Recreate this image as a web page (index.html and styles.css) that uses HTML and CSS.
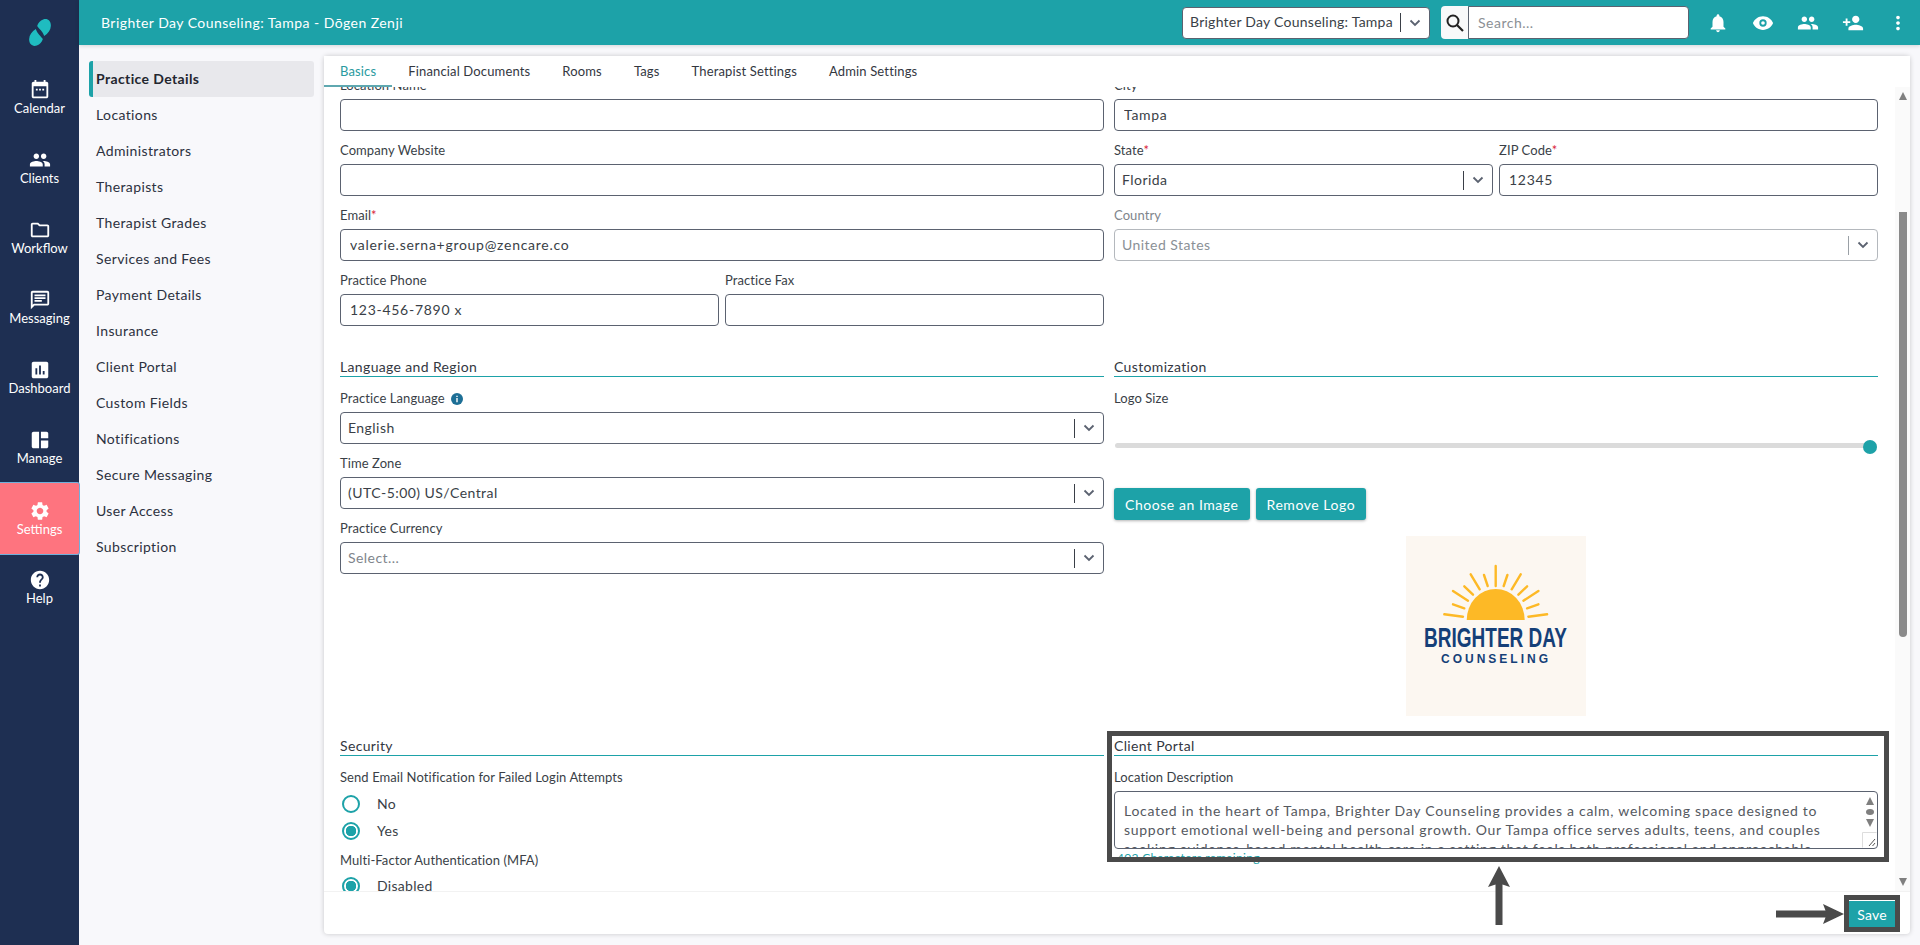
FILE: index.html
```html
<!DOCTYPE html>
<html lang="en">
<head>
    <meta charset="UTF-8">
    <meta name="viewport" content="width=device-width, initial-scale=1.0">
    <title>Practice Details</title>
    <link rel="stylesheet" href="styles.css">
</head>
<body>
    <nav class="rail">
        <div class="rail-logo">
            <svg width="22" height="27" viewBox="0 0 21.700 27"><path fill="#1fbcc0" d="M14 .5C18.500-1 22 2 21.700 7 21.500 11 19 14.500 15 17 13.500 12 10 10 8 7 9 4 11 1.500 14 .5z"/><path fill="#1fbcc0" d="M7.700 26.500C3.200 28-.3 25 0 20 .2 16 2.700 12.500 6.700 10 8.200 15 11.700 17 13.700 20 12.700 23 10.700 25.500 7.700 26.500z"/></svg>
        </div>
        <a class="rail-item"><svg class="icon" viewBox="0 0 24 24"><path fill-rule="evenodd" d="M19 3h-1V1h-2v2H8V1H6v2H5c-1.110 0-2 .9-2 2v14c0 1.100.89 2 2 2h14c1.100 0 2-.9 2-2V5c0-1.100-.9-2-2-2zm0 16H5V8h14v11z"/><path d="M7.500 10.500h2v2h-2zM11 10.500h2v2h-2zM14.500 10.500h2v2h-2z"/></svg><span>Calendar</span></a>
        <a class="rail-item"><svg class="icon" viewBox="0 0 24 24"><path d="M16 11c1.660 0 2.990-1.340 2.990-3S17.660 5 16 5c-1.660 0-3 1.340-3 3s1.340 3 3 3zm-8 0c1.660 0 2.990-1.340 2.990-3S9.660 5 8 5C6.340 5 5 6.340 5 8s1.340 3 3 3zm0 2c-2.330 0-7 1.170-7 3.500V19h14v-2.500c0-2.330-4.670-3.500-7-3.500zm8 0c-.29 0-.62.02-.97.05 1.160.84 1.970 1.970 1.970 3.450V19h6v-2.500c0-2.330-4.670-3.500-7-3.500z"/></svg><span>Clients</span></a>
        <a class="rail-item"><svg class="icon" viewBox="0 0 24 24"><path d="M9.170 6l2 2H20v10H4V6h5.170M10 4H4c-1.100 0-1.990.9-1.990 2L2 18c0 1.100.9 2 2 2h16c1.100 0 2-.9 2-2V8c0-1.100-.9-2-2-2h-8l-2-2z"/></svg><span>Workflow</span></a>
        <a class="rail-item"><svg class="icon" viewBox="0 0 24 24"><path d="M20 2H4c-1.100 0-2 .9-2 2v18l4-4h14c1.100 0 2-.9 2-2V4c0-1.100-.9-2-2-2zm0 14H5.200L4 17.200V4h16v12zM6 12h8v2H6zm0-3h12v2H6zm0-3h12v2H6z"/></svg><span>Messaging</span></a>
        <a class="rail-item"><svg class="icon" viewBox="0 0 24 24"><path d="M19 3H5c-1.100 0-2 .9-2 2v14c0 1.100.9 2 2 2h14c1.100 0 2-.9 2-2V5c0-1.100-.9-2-2-2zM9 17H7v-7h2v7zm4 0h-2V7h2v10zm4 0h-2v-4h2v4z"/></svg><span>Dashboard</span></a>
        <a class="rail-item"><svg class="icon" viewBox="0 0 24 24"><path d="M5 3h6v18H5c-1.100 0-2-.9-2-2V5c0-1.100.9-2 2-2zM13 3h6c1.100 0 2 .9 2 2v5h-8zM13 12.500h8V19c0 1.100-.9 2-2 2h-6z"/></svg><span>Manage</span></a>
        <a class="rail-item active"><svg class="icon" viewBox="0 0 24 24"><path d="M19.140 12.940c.04-.3.06-.61.06-.94 0-.32-.02-.64-.07-.94l2.030-1.580c.18-.14.23-.41.12-.61l-1.920-3.320c-.12-.22-.37-.29-.59-.22l-2.390.96c-.5-.38-1.030-.7-1.620-.94l-.36-2.540c-.04-.24-.24-.41-.48-.41h-3.840c-.24 0-.43.17-.47.41l-.36 2.540c-.59.24-1.130.57-1.620.94l-2.390-.96c-.22-.08-.47 0-.59.22L2.740 8.870c-.12.21-.08.47.12.61l2.030 1.580c-.05.3-.09.63-.09.94s.02.64.07.94l-2.030 1.580c-.18.14-.23.41-.12.61l1.920 3.320c.12.22.37.29.59.22l2.390-.96c.5.38 1.030.7 1.620.94l.36 2.540c.05.24.24.41.48.41h3.840c.24 0 .44-.17.47-.41l.36-2.540c.59-.24 1.130-.56 1.620-.94l2.390.96c.22.08.47 0 .59-.22l1.920-3.320c.12-.22.07-.47-.12-.61l-2.010-1.580zM12 15.600c-1.980 0-3.600-1.620-3.600-3.600s1.620-3.600 3.600-3.600 3.600 1.620 3.600 3.600-1.620 3.600-3.600 3.600z"/></svg><span>Settings</span></a>
        <a class="rail-item"><svg class="icon" viewBox="0 0 24 24"><path d="M12 2C6.480 2 2 6.480 2 12s4.480 10 10 10 10-4.480 10-10S17.520 2 12 2zm1 17h-2v-2h2v2zm2.070-7.750l-.9.920C13.450 12.900 13 13.500 13 15h-2v-.5c0-1.100.45-2.100 1.170-2.830l1.240-1.260c.37-.36.59-.86.59-1.410 0-1.100-.9-2-2-2s-2 .9-2 2H8c0-2.210 1.790-4 4-4s4 1.790 4 4c0 .88-.36 1.680-.93 2.250z"/></svg><span>Help</span></a>
    </nav>

    <div class="main">
        <header class="topbar">
            <div class="topbar-title">Brighter Day Counseling: Tampa - Dōgen Zenji</div>
            <div class="select topbar-select"><span class="select-value">Brighter Day Counseling: Tampa</span><span class="select-sep"></span><svg class="chevron" viewBox="0 0 12 8"><path d="M1.500 1.500 6 6l4.500-4.500"/></svg></div>
            <button class="search-btn"><svg width="20" height="20" viewBox="0 0 20 20"><circle cx="8" cy="8" r="5.500" fill="none" stroke="#222" stroke-width="2"/><path d="m12 12 6 6" stroke="#222" stroke-width="2.200"/></svg></button>
            <input class="search-input" placeholder="Search...">
            <div class="topbar-icons">
                <svg class="icon" viewBox="0 0 24 24"><path d="M12 22c1.100 0 2-.9 2-2h-4c0 1.100.89 2 2 2zm6-6v-5c0-3.070-1.640-5.640-4.500-6.320V4c0-.83-.67-1.500-1.500-1.500s-1.500.67-1.500 1.500v.68C7.630 5.360 6 7.920 6 11v5l-2 2v1h16v-1l-2-2z"/></svg>
                <svg class="icon" viewBox="0 0 24 24"><path fill-rule="evenodd" d="M12 4.500C7 4.500 2.730 7.610 1 12c1.730 4.390 6 7.500 11 7.500s9.270-3.110 11-7.500c-1.730-4.390-6-7.500-11-7.500zM12 8a4 4 0 1 1 0 8 4 4 0 0 1 0-8zM12 10a2 2 0 1 0 0 4 2 2 0 0 0 0-4z"/></svg>
                <svg class="icon" viewBox="0 0 24 24"><path d="M16 11c1.660 0 2.990-1.340 2.990-3S17.660 5 16 5c-1.660 0-3 1.340-3 3s1.340 3 3 3zm-8 0c1.660 0 2.990-1.340 2.990-3S9.660 5 8 5C6.340 5 5 6.340 5 8s1.340 3 3 3zm0 2c-2.330 0-7 1.170-7 3.500V19h14v-2.500c0-2.330-4.670-3.500-7-3.500zm8 0c-.29 0-.62.02-.97.05 1.160.84 1.970 1.970 1.970 3.450V19h6v-2.500c0-2.330-4.670-3.500-7-3.500z"/></svg>
                <svg class="icon" viewBox="0 0 24 24"><path d="M15 12c2.210 0 4-1.790 4-4s-1.790-4-4-4-4 1.790-4 4 1.790 4 4 4zm-9-2V7H4v3H1v2h3v3h2v-3h3v-2H6zm9 4c-2.670 0-8 1.340-8 4v2h16v-2c0-2.660-5.330-4-8-4z"/></svg>
                <svg class="icon" viewBox="0 0 24 24"><path d="M12 8c1.100 0 2-.9 2-2s-.9-2-2-2-2 .9-2 2 .9 2 2 2zm0 2c-1.100 0-2 .9-2 2s.9 2 2 2 2-.9 2-2-.9-2-2-2zm0 6c-1.100 0-2 .9-2 2s.9 2 2 2 2-.9 2-2-.9-2-2-2z"/></svg>
            </div>
        </header>

        <div class="below">
            <ul class="subnav">
                <li class="active">Practice Details</li>
                <li>Locations</li>
                <li>Administrators</li>
                <li>Therapists</li>
                <li>Therapist Grades</li>
                <li>Services and Fees</li>
                <li>Payment Details</li>
                <li>Insurance</li>
                <li>Client Portal</li>
                <li>Custom Fields</li>
                <li>Notifications</li>
                <li>Secure Messaging</li>
                <li>User Access</li>
                <li>Subscription</li>
            </ul>

            <section class="card">
                <div class="tabs">
                    <a class="tab active">Basics</a>
                    <a class="tab">Financial Documents</a>
                    <a class="tab">Rooms</a>
                    <a class="tab">Tags</a>
                    <a class="tab">Therapist Settings</a>
                    <a class="tab">Admin Settings</a>
                </div>

                <div class="pane">
                    <div class="form">
                        <div class="form-grid">
                            <div class="block basics">
                                <div class="field"><label>Location Name</label><input class="input"></div>
                                <div class="field"><label>Company Website</label><input class="input"></div>
                                <div class="field"><label>Email<em>*</em></label><input class="input" value="valerie.serna+group@zencare.co"></div>
                                <div class="split">
                                    <div class="field"><label>Practice Phone</label><input class="input" value="123-456-7890 x"></div>
                                    <div class="field"><label>Practice Fax</label><input class="input"></div>
                                </div>
                            </div>
                            <div class="block">
                                <div class="field"><label>City</label><input class="input" value="Tampa"></div>
                                <div class="split">
                                    <div class="field"><label>State<em>*</em></label><div class="select"><span class="select-value">Florida</span><span class="select-sep"></span><svg class="chevron" viewBox="0 0 12 8"><path d="M1.500 1.500 6 6l4.500-4.500"/></svg></div></div>
                                    <div class="field"><label>ZIP Code<em>*</em></label><input class="input" value="12345"></div>
                                </div>
                                <div class="field disabled"><label>Country</label><div class="select"><span class="select-value">United States</span><span class="select-sep"></span><svg class="chevron" viewBox="0 0 12 8"><path d="M1.500 1.500 6 6l4.500-4.500"/></svg></div></div>
                            </div>

                            <div class="block">
                                <h3 class="section-title">Language and Region</h3>
                                <div class="field"><label>Practice Language <svg class="info" viewBox="0 0 12 12"><circle cx="6" cy="6" r="6" fill="#1d6f96"/><path d="M5.300 5h1.400v4.200H5.300zM5.300 2.700h1.400V4H5.300z" fill="#fff"/></svg></label><div class="select"><span class="select-value">English</span><span class="select-sep"></span><svg class="chevron" viewBox="0 0 12 8"><path d="M1.500 1.500 6 6l4.500-4.500"/></svg></div></div>
                                <div class="field"><label>Time Zone</label><div class="select"><span class="select-value">(UTC-5:00) US/Central</span><span class="select-sep"></span><svg class="chevron" viewBox="0 0 12 8"><path d="M1.500 1.500 6 6l4.500-4.500"/></svg></div></div>
                                <div class="field"><label>Practice Currency</label><div class="select"><span class="select-value placeholder">Select...</span><span class="select-sep"></span><svg class="chevron" viewBox="0 0 12 8"><path d="M1.500 1.500 6 6l4.500-4.500"/></svg></div></div>
                            </div>
                            <div class="block">
                                <h3 class="section-title">Customization</h3>
                                <label class="plain-label">Logo Size</label>
                                <div class="slider"><span class="slider-thumb"></span></div>
                                <div class="btn-row">
                                    <button class="btn">Choose an Image</button>
                                    <button class="btn">Remove Logo</button>
                                </div>
                                <div class="logo-wrap">
                                    <svg class="logo" width="180" height="180" viewBox="0 0 180 180">
                                        <rect width="180" height="180" fill="#fcf7f1"/>
                                        <path fill="#fdb926" d="M60.700 84a29 31 0 0 1 58 0z"/>
                                        <g stroke="#fdb926" stroke-width="2.400" stroke-linecap="round">
                                            <path d="M89.700 30v20M78 39l3.700 11M64.700 38.300l9 15M58.300 50.300l8.700 8.400M47 55l15 9.700M47 68.300l11.300 4M38.300 78.300l18.700 2.400"/>
                                            <path d="M101.400 39l-3.700 11M114.700 38.300l-9 15M121.100 50.300l-8.700 8.400M132.400 55l-15 9.700M132.400 68.300l-11.300 4M141.100 78.300l-18.700 2.400"/>
                                        </g>
                                        <text class="logo-big" x="18" y="111" textLength="143" lengthAdjust="spacingAndGlyphs">BRIGHTER DAY</text>
                                        <text class="logo-small" x="35" y="127" textLength="107">COUNSELING</text>
                                    </svg>
                                </div>
                            </div>

                            <div class="block security">
                                <h3 class="section-title">Security</h3>
                                <label class="plain-label">Send Email Notification for Failed Login Attempts</label>
                                <div class="radio-row"><span class="radio"></span>No</div>
                                <div class="radio-row"><span class="radio checked"></span>Yes</div>
                                <label class="plain-label mfa">Multi-Factor Authentication (MFA)</label>
                                <div class="radio-row"><span class="radio checked"></span>Disabled</div>
                            </div>
                            <div class="block">
                                <h3 class="section-title">Client Portal</h3>
                                <label class="plain-label">Location Description</label>
                                <div class="textarea">
                                    <p>Located in the heart of Tampa, Brighter Day Counseling provides a calm, welcoming space designed to support emotional well-being and personal growth. Our Tampa office serves adults, teens, and couples seeking evidence-based mental health care in a setting that feels both professional and approachable.</p>
                                    <div class="mini-scroll">
                                        <i class="tri-up"></i><i class="dot"></i><i class="tri-down"></i>
                                        <svg class="resizer" width="15" height="16" viewBox="0 0 15 16"><path d="M.5 15.500V.5h14" fill="none" stroke="#ddd"/><path d="m13 7-6 7M13 11l-2.500 3" stroke="#555"/></svg>
                                    </div>
                                </div>
                                <div class="remaining">402 Characters remaining</div>
                            </div>
                        </div>
                    </div>
                    <div class="scrollbar">
                        <i class="tri-up"></i>
                        <span class="scroll-thumb"></span>
                        <i class="tri-down"></i>
                    </div>
                </div>

                <div class="card-foot">
                    <button class="btn save">Save</button>
                </div>
            </section>
        </div>
    </div>

    <!-- annotations drawn on top of the screenshot -->
    <div class="mark mark-portal"></div>
    <div class="mark mark-save"></div>
    <svg class="arrow arrow-up" width="24" height="60" viewBox="0 0 24 60"><path fill="#4a4a4a" d="M12 0 23 21 15.500 18.500V59h-7V18.500L1 21z"/></svg>
    <svg class="arrow arrow-right" width="68" height="22" viewBox="0 0 68 22"><path fill="#4a4a4a" d="M68 11 47 21 49.500 14.500H0v-7h49.500L47 1z"/></svg>
</body>
</html>
```

FILE: styles.css
```css
*, *::before, *::after{
    box-sizing: border-box;
}
body{
    margin: 0;
    height: 945px;
    overflow: hidden;
    position: relative;
    display: flex;
    background: #f8f8fb;
    color: #33373f;
    font-family: "Lato", "Open Sans", sans-serif;
    font-size: 13px;
}
.icon{
    width: 22px;
    height: 22px;
    fill: #fff;
    display: block;
    flex: none;
}

/* left rail */
.rail{
    width: 79px;
    flex: none;
    background: #1e2f52;
    color: #fff;
}
.rail-logo{
    height: 64px;
    display: flex;
    align-items: center;
    justify-content: center;
}
.rail-item{
    height: 70px;
    padding-top: 15px;
    display: flex;
    flex-direction: column;
    align-items: center;
    font-size: 13px;
    line-height: 16px;
}
.rail-item span{
    margin-top: -1px;
}
.rail-item.active{
    background: #fe747f;
    height: 73px;
    margin: -2px -1px -1px 0;
    padding-top: 17px;
    border: 1px solid #6fb0dc;
    border-left: 0;
    border-radius: 0 3px 3px 0;
    position: relative;
}

/* top bar */
.main{
    flex: 1;
    min-width: 0;
    display: flex;
    flex-direction: column;
}
.topbar{
    height: 45px;
    flex: none;
    background: #1da2a8;
    display: flex;
    align-items: center;
    padding-left: 22px;
    box-shadow: 0 1px 4px rgba(0, 0, 0, .15);
    color: #fff;
}
.topbar-title{
    flex: 1;
    font-size: 14px;
    letter-spacing: .45px;
}
.topbar-select{
    width: 248px;
    height: 32px;
    margin-right: 11px;
    padding-left: 8px;
    color: #33373f;
    font-size: 14px;
}
.topbar-select .select-value{
    letter-spacing: .25px;
}
.topbar-select .select-sep{
    margin-right: 8px;
}
.search-btn{
    width: 27px;
    height: 33px;
    padding: 0;
    border: 0;
    border-radius: 4px 0 0 4px;
    background: #f8f9fa;
    display: flex;
    align-items: center;
    justify-content: center;
}
.search-input{
    width: 221px;
    height: 33px;
    border: 1px solid #5b6270;
    border-radius: 0 4px 4px 0;
    padding: 0 9px;
    font: 14px "Lato", sans-serif;
    letter-spacing: .5px;
    background: #fff;
}
.search-input::placeholder{
    color: #8b9095;
}
.topbar-icons{
    width: 231px;
    padding: 0 11px 0 18px;
    display: flex;
    justify-content: space-between;
}

/* second column menu */
.below{
    flex: 1;
    min-height: 0;
    display: flex;
}
.subnav{
    width: 245px;
    flex: none;
    margin: 0;
    padding: 16px 10px 0 10px;
    list-style: none;
}
.subnav li{
    height: 36px;
    padding-left: 7px;
    line-height: 35px;
    font-size: 14px;
    letter-spacing: .38px;
    color: #2c3140;
}
.subnav li.active{
    padding-left: 3px;
    border-left: 4px solid #1da2a8;
    border-radius: 3px;
    background: #e8e8ec;
    font-weight: 700;
    color: #23262f;
}

/* card */
.card{
    width: 1586px;
    height: 878px;
    margin-top: 11px;
    display: flex;
    flex-direction: column;
    background: #fff;
    border-radius: 4px;
    box-shadow: 0 0 5px rgba(0, 0, 0, .2);
}
.tabs{
    height: 31px;
    flex: none;
    display: flex;
    background: #fff;
}
.tab{
    padding: 0 16px;
    line-height: 31px;
    font-size: 13px;
    letter-spacing: .15px;
    color: #33373f;
    border-bottom: 2px solid transparent;
}
.tab.active{
    color: #2a9aa0;
    border-bottom-color: #5fa8b0;
}
.pane{
    flex: 1;
    min-height: 0;
    display: flex;
    overflow: hidden;
}
.form{
    flex: 1;
    min-width: 0;
    padding: 0 10px 0 16px;
    overflow: hidden;
}
.form-grid{
    margin-top: -10px;
    display: grid;
    grid-template-columns: 764px 764px;
    column-gap: 10px;
    row-gap: 20px;
    align-items: start;
}
.basics{
    padding-bottom: 1px;
}
.field{
    margin-bottom: 11px;
}
label, .plain-label{
    display: block;
    line-height: 16px;
    margin-bottom: 6px;
    font-size: 13px;
    letter-spacing: .08px;
    color: #3a3f47;
}
label em{
    font-style: normal;
    color: #d9263a;
}
.info{
    width: 12px;
    height: 12px;
    margin-left: 3px;
    vertical-align: -2px;
}
.input{
    display: block;
    width: 100%;
    height: 32px;
    border: 1px solid #5b6270;
    border-radius: 4px;
    padding: 0 9px 2px;
    font: 14px "Lato", sans-serif;
    letter-spacing: .72px;
    color: #3a3f47;
    background: #fff;
}
.split{
    display: grid;
    grid-template-columns: 1fr 1fr;
    column-gap: 6px;
}
.select{
    height: 32px;
    display: flex;
    align-items: center;
    border: 1px solid #5b6270;
    border-radius: 4px;
    padding-left: 7px;
    font-size: 14px;
    letter-spacing: .45px;
    color: #3a3f47;
    background: #fff;
}
.select-value{
    flex: 1;
    white-space: nowrap;
    padding-bottom: 2px;
}
.select-value.placeholder{
    color: #80858c;
}
.select-sep{
    width: 1px;
    height: 19px;
    margin: 0 8px 0 2px;
    background: #3a3f47;
}
.chevron{
    width: 12px;
    height: 8px;
    margin-right: 8px;
    fill: none;
    stroke: #5b6270;
    stroke-width: 1.800;
}
.disabled label{
    color: #80858c;
}
.disabled .select{
    border-color: #b4b8bd;
    color: #8a9096;
}
.disabled .select-sep{
    background: #9aa0a6;
}
.section-title{
    margin: 0 0 13px;
    height: 19px;
    line-height: 18px;
    border-bottom: 1px solid #1da2a8;
    font-size: 14px;
    font-weight: 400;
    letter-spacing: .35px;
    color: #33373f;
}

/* customization */
.slider{
    height: 5px;
    margin: 37px 0 0 1px;
    width: 762px;
    background: #dbdbdb;
    border-radius: 3px;
    display: flex;
    justify-content: flex-end;
    align-items: center;
}
.slider-thumb{
    width: 14px;
    height: 14px;
    margin-top: 3px;
    border-radius: 50%;
    background: #1da2a8;
}
.btn-row{
    margin-top: 40px;
    display: flex;
    gap: 6px;
}
.btn{
    height: 32px;
    padding: 0 11px;
    border: 0;
    border-radius: 3px;
    background: #1da2a8;
    color: #fff;
    font: 14px "Lato", sans-serif;
    letter-spacing: .55px;
    box-shadow: 0 1px 3px rgba(0, 0, 0, .3);
}
.logo-wrap{
    margin: 16px 0 1px;
    display: flex;
    justify-content: center;
}
.logo{
    display: block;
}
.logo-big{
    font-family: "Liberation Sans Narrow", "Liberation Sans", sans-serif;
    font-size: 28px;
    font-weight: 700;
    fill: #153f78;
}
.logo-small{
    font-family: "Liberation Sans", sans-serif;
    font-size: 12px;
    font-weight: 700;
    fill: #153f78;
}

/* security */
.security .plain-label{
    margin-bottom: 5px;
}
.radio-row{
    height: 27px;
    display: flex;
    align-items: center;
    gap: 17px;
    padding-left: 2px;
    font-size: 14px;
    letter-spacing: .3px;
    color: #3a3f47;
}
.radio{
    width: 18px;
    height: 18px;
    border: 2px solid #1da2a8;
    border-radius: 50%;
    flex: none;
}
.radio.checked{
    background: radial-gradient(circle, #1da2a8 0 5px, #fff 5.500px);
}
.security .plain-label.mfa{
    margin: 8px 0 4px;
}

/* client portal */
.textarea{
    height: 58px;
    margin-top: 6px;
    display: flex;
    overflow: hidden;
    border: 1px solid #5b6270;
    border-radius: 4px;
    background: #fff;
}
.textarea p{
    flex: 1;
    margin: 0;
    padding: 9px 16px 0 9px;
    line-height: 19px;
    font-size: 14px;
    letter-spacing: .72px;
    color: #55595f;
}
.mini-scroll{
    width: 15px;
    flex: none;
    padding-top: 5px;
    display: flex;
    flex-direction: column;
    align-items: center;
    gap: 4px;
    position: relative;
}
.mini-scroll .dot{
    width: 8px;
    height: 6px;
    border-radius: 50%;
    background: #7f7f7f;
}
.resizer{
    position: absolute;
    right: 0;
    bottom: 0;
}
.remaining{
    margin: 1px 0 0 3px;
    font-size: 12px;
    line-height: 16px;
    letter-spacing: .3px;
    color: #1da2a8;
}
.tri-up, .tri-down{
    display: block;
    width: 0;
    height: 0;
    border-left: 4.500px solid transparent;
    border-right: 4.500px solid transparent;
}
.tri-up{
    border-bottom: 8px solid #7f7f7f;
}
.tri-down{
    border-top: 8px solid #7f7f7f;
}

/* outer scrollbar */
.scrollbar{
    width: 15px;
    flex: none;
    padding: 5px 0 5px;
    display: flex;
    flex-direction: column;
    align-items: center;
    background: #fafafa;
}
.scroll-thumb{
    width: 8px;
    height: 425px;
    margin: 112px 0 auto;
    border-radius: 0 0 4px 4px;
    background: #8a8a8a;
}

.card-foot{
    height: 43px;
    flex: none;
    display: flex;
    justify-content: flex-end;
    align-items: flex-start;
    padding: 9px 15px 0 0;
    border-top: 1px solid #f2f2f2;
}
.btn.save{
    width: 46px;
    height: 27px;
    padding: 0;
    border-radius: 0;
    box-shadow: none;
    letter-spacing: .2px;
}

/* annotations */
.mark{
    position: absolute;
    border: 5px solid #4a4a4a;
}
.mark-portal{
    left: 1107px;
    top: 731px;
    width: 782px;
    height: 131px;
}
.mark-save{
    left: 1844px;
    top: 895px;
    width: 56px;
    height: 37px;
}
.arrow{
    position: absolute;
    display: block;
}
.arrow-up{
    left: 1487px;
    top: 866px;
}
.arrow-right{
    left: 1776px;
    top: 903px;
}
```
